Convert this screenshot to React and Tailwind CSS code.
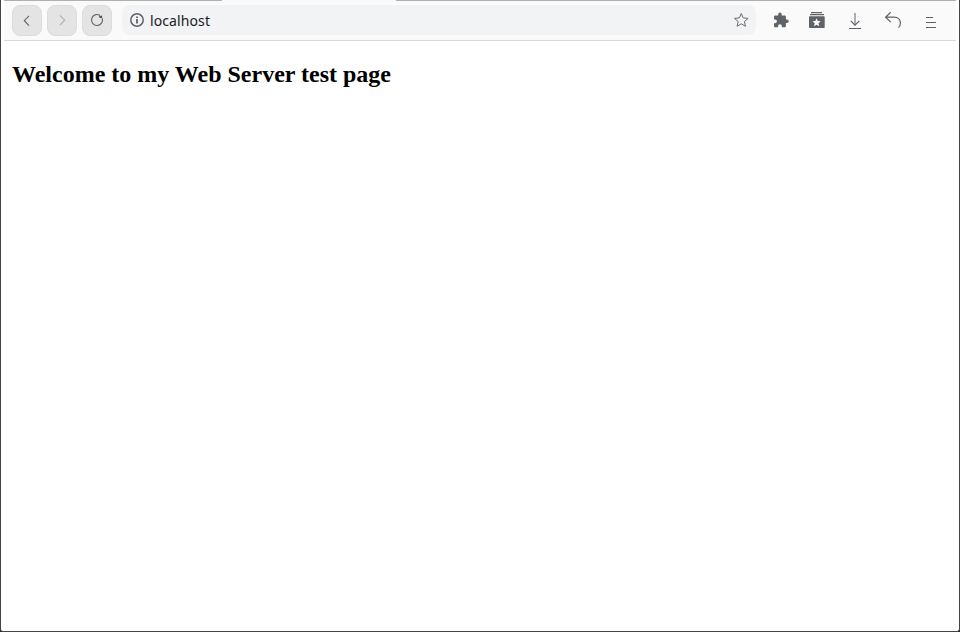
import React from "react";

function NavButton({ label, children }) {
  return (
    <button
      aria-label={label}
      className="flex h-[31px] w-[30px] items-center justify-center rounded-[8px] border border-[#dcdcdc] bg-[#e4e4e4]"
    >
      {children}
    </button>
  );
}

function Toolbar() {
  return (
    <header className="flex h-[41px] flex-col border-b border-[#d8d8d8] bg-[#fafafa]">
      <div className="flex h-px shrink-0">
        <div className="w-[218px] bg-[#b0b0b0]" />
        <div className="w-[174px]" />
        <div className="flex-1 bg-[#b0b0b0]" />
      </div>
      <div className="flex items-start pt-1 pl-2">
        <div className="flex gap-[5px]">
          <NavButton label="Back">
            <svg width="28" height="29" viewBox="13 6 28 29" fill="none" stroke="#666" strokeWidth="1.15">
              <path d="M29 15.8l-4.7 4.9 4.7 4.9" />
            </svg>
          </NavButton>
          <NavButton label="Forward">
            <svg width="28" height="29" viewBox="48 6 28 29" fill="none" stroke="#b0b0b0" strokeWidth="1.15">
              <path d="M60 15.3l4.6 4.9-4.6 4.9" />
            </svg>
          </NavButton>
          <NavButton label="Reload">
            <svg width="28" height="29" viewBox="83 6 28 29" fill="none" stroke="#666" strokeWidth="1.15">
              <path d="M102.2 18.2A5.5 5.5 0 1 1 100 15.4" />
              <path d="M102.1 14.9v3.2h-2.6l-.5-2.6 2.2.6z" fill="#555" stroke="none" />
            </svg>
          </NavButton>
        </div>
        <div className="ml-[10px] flex h-[30px] w-[634px] items-center rounded-[8px] bg-[#f1f3f4] pr-[7px] pl-[8px]">
          <svg width="14" height="14" viewBox="0 0 14 14" fill="none" stroke="#5f6368">
            <circle cx="7" cy="7" r="6.2" strokeWidth="1.5" />
            <path d="M7 6v4.4M7 3.4v1.6" strokeWidth="1.8" />
          </svg>
          <span className="ml-[6px] flex-1 pt-[2px] font-['Noto_Sans',sans-serif] text-[14px] leading-[20px] tracking-[0.1px] text-[#202124]">
            localhost
          </span>
          <svg width="16" height="16" viewBox="0 0 16 16" fill="none" stroke="#6b6f73" strokeWidth="1">
            <path d="M8.3 1.5l1.9 4.4 4.9.5-3.7 3.2 1.1 4.7-4.2-2.5-4.2 2.5 1.1-4.7-3.7-3.2 4.9-.5z" />
          </svg>
        </div>
        <svg className="ml-[16px]" width="18" height="30" viewBox="772 5 18 30" fill="#5f6368">
          <path
            transform="translate(772.6 11.9) scale(.7)"
            d="M20.5 11H19V7c0-1.1-.9-2-2-2h-4V3.5a2.5 2.5 0 0 0-5 0V5H4c-1.1 0-1.99.9-1.99 2v3.8H3.5c1.49 0 2.7 1.21 2.7 2.7s-1.21 2.7-2.7 2.7H2V20c0 1.1.9 2 2 2h3.8v-1.5c0-1.49 1.21-2.7 2.7-2.7s2.7 1.21 2.7 2.7V22H17c1.1 0 2-.9 2-2v-4h1.5a2.5 2.5 0 0 0 0-5z"
          />
        </svg>
        <svg className="ml-[18px]" width="18" height="30" viewBox="808 5 18 30" fill="#5f6368">
          <path d="M811 12h11v1.2h-11zM810 14h14v1.2h-14z" />
          <path d="M809.8 16.2h14.1a.8.8 0 0 1 .8.8v10.2a.8.8 0 0 1-.8.8h-14.1a.8.8 0 0 1-.8-.8v-10.2a.8.8 0 0 1 .8-.8z" />
          <path d="M816.6 18.2l1.2 2.8 3 .3-2.3 2 .7 3-2.6-1.6-2.6 1.6.7-3-2.3-2 3-.3z" fill="#fafafa" />
        </svg>
        <svg className="ml-[21px]" width="16" height="30" viewBox="847 5 16 30" fill="none" stroke="#5f6368">
          <path d="M855 13v12.3" stroke="#888b8f" strokeWidth="1.4" />
          <path d="M850.7 20.8l4.3 4.4 4.3-4.4" strokeWidth="1.2" />
          <path d="M849 28.5h12" />
        </svg>
        <svg className="ml-[20px]" width="20" height="30" viewBox="883 5 20 30" fill="none" stroke="#5f6368" strokeWidth="1.2">
          <path d="M890.7 12.3l-5.1 4.9 5.1 4.9M885.8 17.2h8.2c4.5 0 6.4 2.9 6.4 5.7 0 2.4-.8 3.8-2 4.7" />
        </svg>
        <svg className="ml-[22px]" width="12" height="30" viewBox="925 5 12 30" fill="#5f6368">
          <path d="M926 17h7v1h-7zM926 22h10v1h-10zM926 27h10v1h-10z" />
        </svg>
      </div>
    </header>
  );
}

export default function App() {
  return (
    <div className="h-[632px] w-[960px] bg-[#171717]">
      <div className="h-full overflow-hidden rounded-b-[3px] border-x border-b border-[#444446] bg-white px-[3px]">
        <Toolbar />
        <main className="px-2 pt-5">
          <h2 className="font-['Liberation_Serif',serif] text-[24px] leading-[27px] font-bold text-black">
            Welcome to my Web Server test page
          </h2>
        </main>
      </div>
    </div>
  );
}
